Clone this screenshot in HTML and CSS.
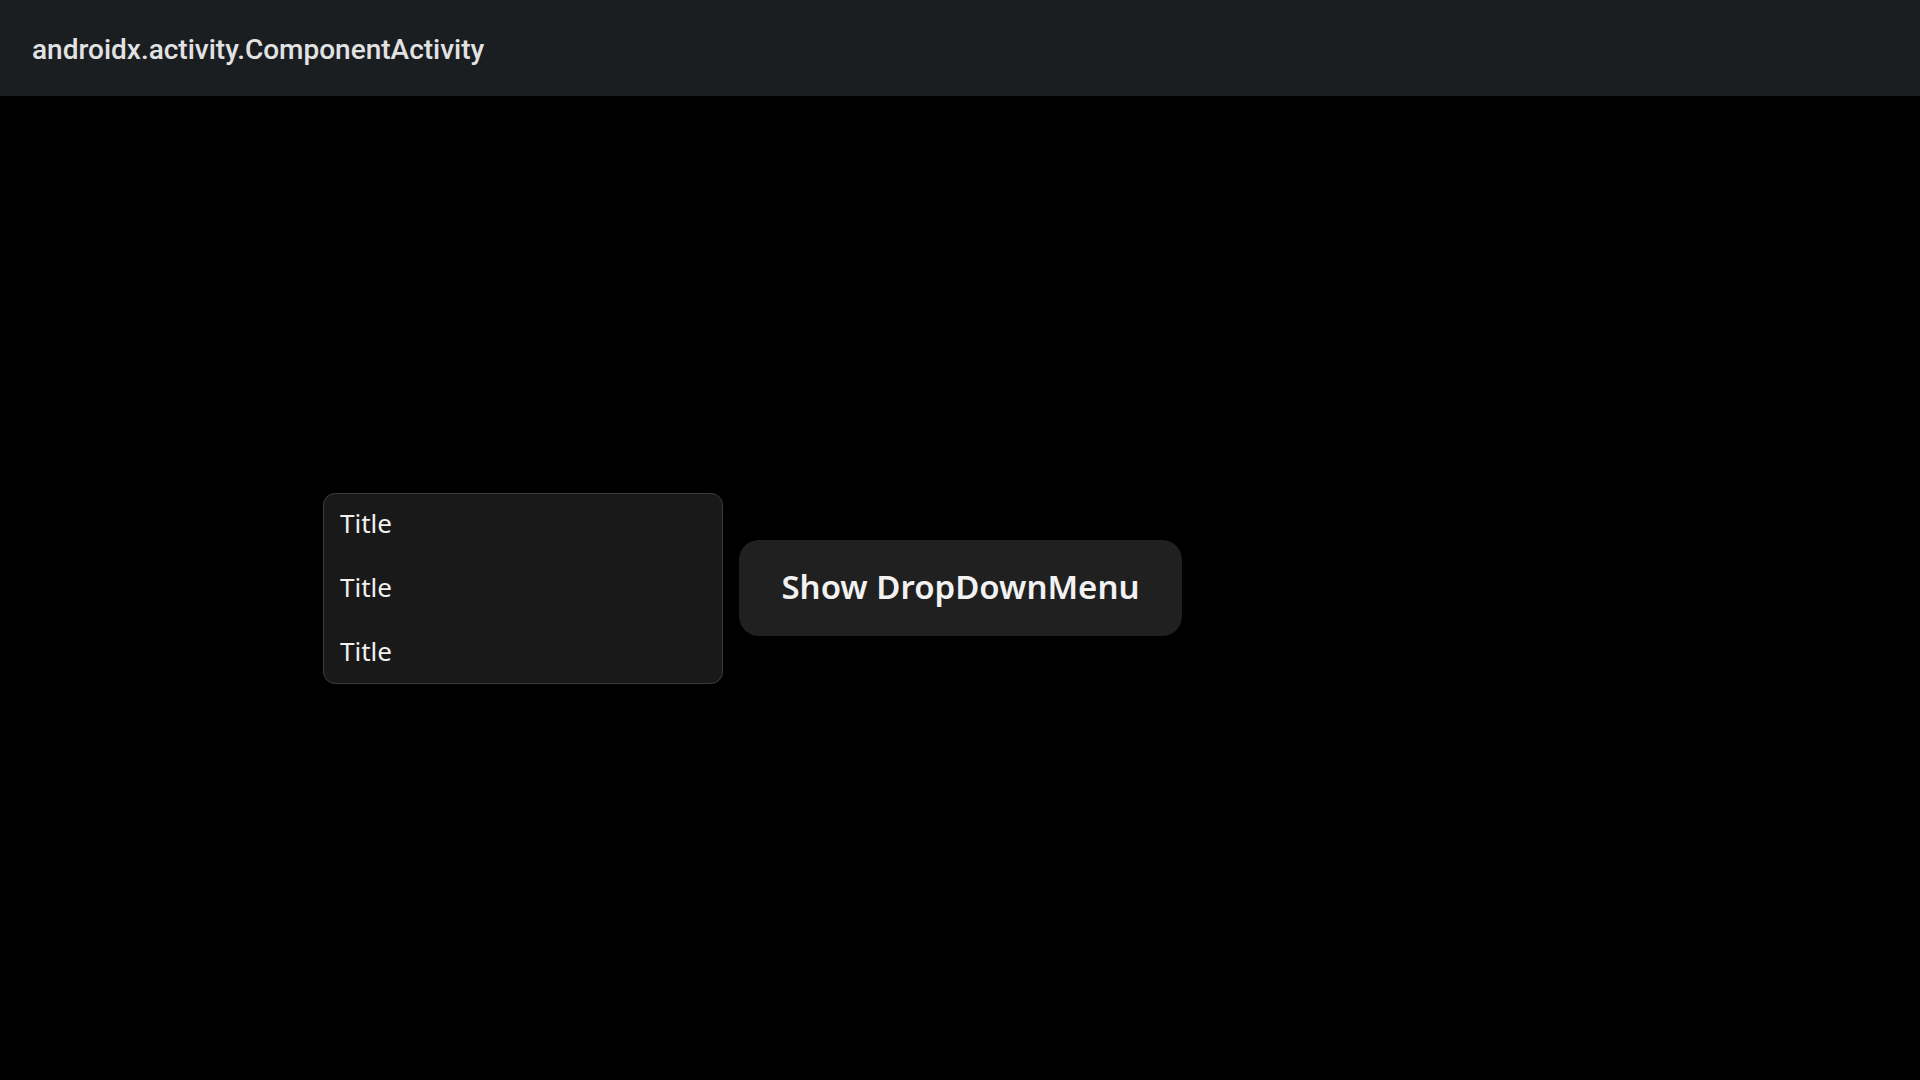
FILE: index.html
```html
<!DOCTYPE html>
<html>
<head>
<meta charset="utf-8">
<link rel="stylesheet" href="styles.css">
</head>
<body>
<header class="appbar">
  <span class="appbar-title">androidx.activity.ComponentActivity</span>
</header>
<main class="content">
  <div class="menu">
    <div class="menu-item">Title</div>
    <div class="menu-item">Title</div>
    <div class="menu-item">Title</div>
  </div>
  <button class="show-btn">Show DropDownMenu</button>
</main>
</body>
</html>
```
FILE: styles.css
```css
html, body {
  margin: 0;
  padding: 0;
  background: #000000;
  width: 1920px;
  height: 1080px;
  overflow: hidden;
}
body {
  display: flex;
  flex-direction: column;
}
.appbar {
  height: 96px;
  flex: none;
  background: #1b1e21;
  display: flex;
  align-items: center;
  padding-left: 32px;
  padding-top: 2px;
  box-sizing: border-box;
}
.appbar-title {
  font-family: Roboto, "Liberation Sans", sans-serif;
  font-size: 28px;
  font-weight: 500;
  color: #e2e2e3;
}
.content {
  flex: 1;
  display: flex;
  align-items: center;
  padding-left: 323px;
  gap: 16px;
}
.menu {
  box-sizing: border-box;
  width: 400px;
  height: 191px;
  background: #191919;
  border: 1.5px solid #3c3c3c;
  border-radius: 12px;
  display: flex;
  flex-direction: column;
  justify-content: flex-start;
}
.menu-item {
  box-sizing: border-box;
  flex: none;
  height: 64px;
  display: flex;
  align-items: center;
  padding-left: 16px;
  padding-bottom: 6px;
  font-family: "Noto Sans", sans-serif;
  font-size: 26px;
  color: #f0f0f0;
}
.show-btn {
  box-sizing: border-box;
  width: 443px;
  height: 96px;
  border: none;
  border-radius: 20px;
  background: #202020;
  color: #f2f2f2;
  font-family: "Noto Sans", sans-serif;
  font-weight: 600;
  font-size: 33px;
  padding: 0 0 3px 0;
  cursor: pointer;
}
```
